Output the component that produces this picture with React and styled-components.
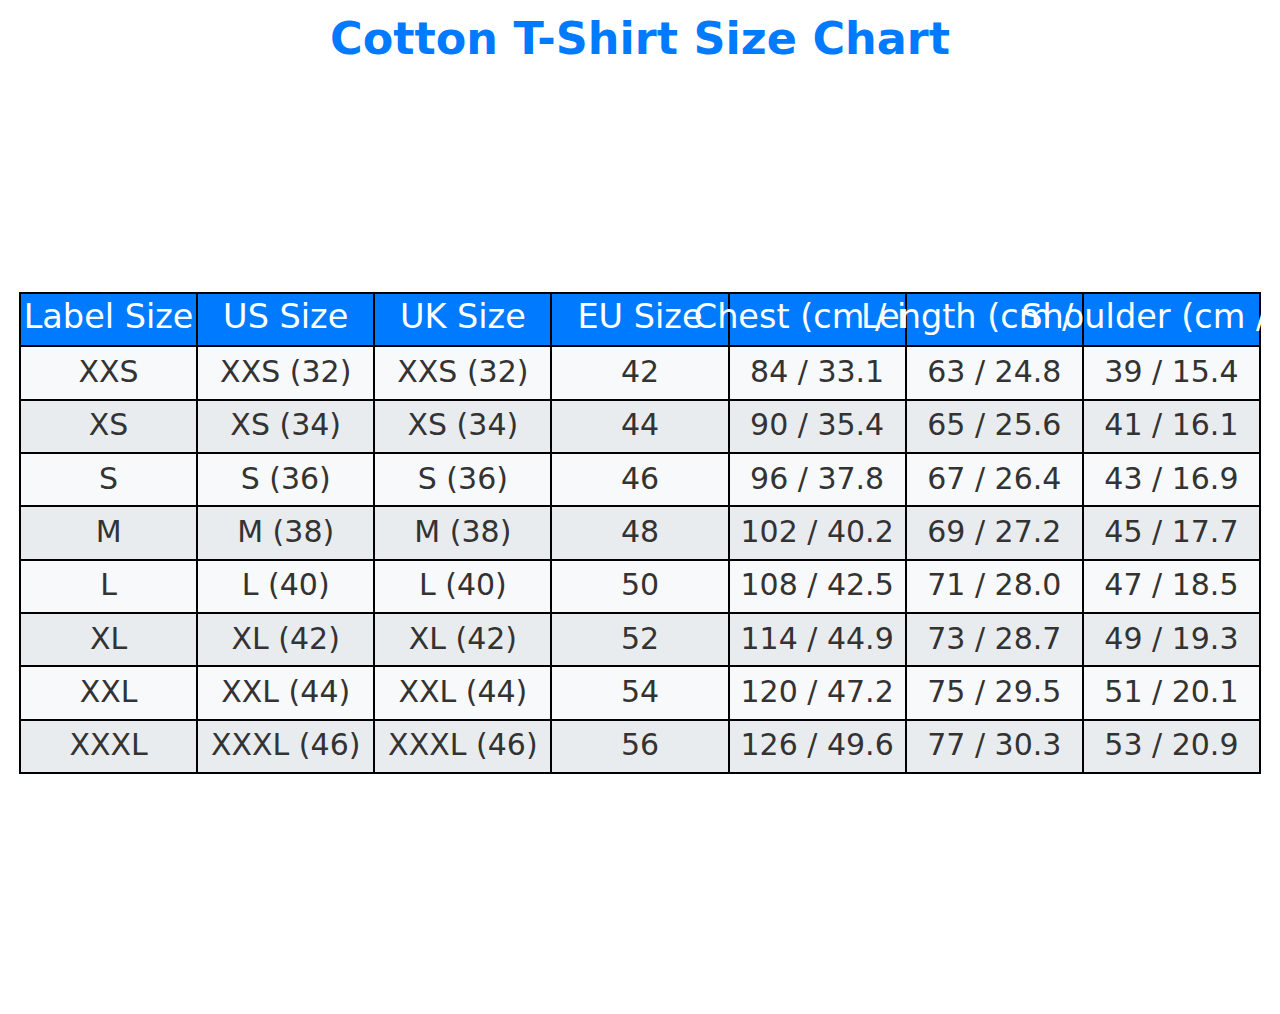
import styled, { createGlobalStyle } from 'styled-components';

const GlobalStyle = createGlobalStyle`
  html, body {
    margin: 0;
    padding: 0;
    background: #ffffff;
    overflow: hidden;
  }
  body {
    font-family: "DejaVu Sans", "Liberation Sans", sans-serif;
  }
`;

const headers = [
  'Label Size',
  'US Size',
  'UK Size',
  'EU Size',
  'Chest (cm / in)',
  'Length (cm / in)',
  'Shoulder (cm / in)',
];

const rows = [
  ['XXS', 'XXS (32)', 'XXS (32)', '42', '84 / 33.1', '63 / 24.8', '39 / 15.4'],
  ['XS', 'XS (34)', 'XS (34)', '44', '90 / 35.4', '65 / 25.6', '41 / 16.1'],
  ['S', 'S (36)', 'S (36)', '46', '96 / 37.8', '67 / 26.4', '43 / 16.9'],
  ['M', 'M (38)', 'M (38)', '48', '102 / 40.2', '69 / 27.2', '45 / 17.7'],
  ['L', 'L (40)', 'L (40)', '50', '108 / 42.5', '71 / 28.0', '47 / 18.5'],
  ['XL', 'XL (42)', 'XL (42)', '52', '114 / 44.9', '73 / 28.7', '49 / 19.3'],
  ['XXL', 'XXL (44)', 'XXL (44)', '54', '120 / 47.2', '75 / 29.5', '51 / 20.1'],
  ['XXXL', 'XXXL (46)', 'XXXL (46)', '56', '126 / 49.6', '77 / 30.3', '53 / 20.9'],
];

export default function App() {
  return (
    <>
      <GlobalStyle />
      <Page>
        <Title>Cotton T-Shirt Size Chart</Title>
        <Chart>
          {headers.map((h) => (
            <HeadCell key={h}>
              <CellText>{h}</CellText>
            </HeadCell>
          ))}
          {rows.map((row, i) =>
            row.map((value, j) => (
              <Cell key={`${i}-${j}`} $alt={i % 2 === 1}>
                <CellText>{value}</CellText>
              </Cell>
            ))
          )}
        </Chart>
      </Page>
    </>
  );
}

const Page = styled.div`
  width: 1280px;
  height: 1014px;
  display: flex;
  flex-direction: column;
  align-items: center;
`;

const Title = styled.h1`
  margin: 14px 0 0;
  font-size: 44.5px;
  line-height: 50px;
  font-weight: bold;
  color: #007bff;
`;

const Chart = styled.div`
  margin-top: 228px;
  width: 1242px;
  display: grid;
  grid-template-columns: repeat(7, 1fr);
  grid-auto-rows: 53.33px;
  border-top: 2px solid #000;
  border-left: 2px solid #000;
  box-sizing: border-box;
  align-self: flex-start;
  margin-left: 19px;
`;

const Cell = styled.div`
  position: relative;
  box-sizing: border-box;
  display: flex;
  align-items: center;
  justify-content: center;
  min-width: 0;
  padding-bottom: 3px;
  border-right: 2px solid #000;
  border-bottom: 2px solid #000;
  background: ${(p) => (p.$alt ? '#e9ecef' : '#f8f9fa')};
  color: #333333;
  font-size: 30px;
`;

const HeadCell = styled(Cell)`
  padding-bottom: 6px;
  background: #007bff;
  color: #ffffff;
  font-size: 33.5px;
`;

const CellText = styled.span`
  white-space: nowrap;
  flex-shrink: 0;
`;
